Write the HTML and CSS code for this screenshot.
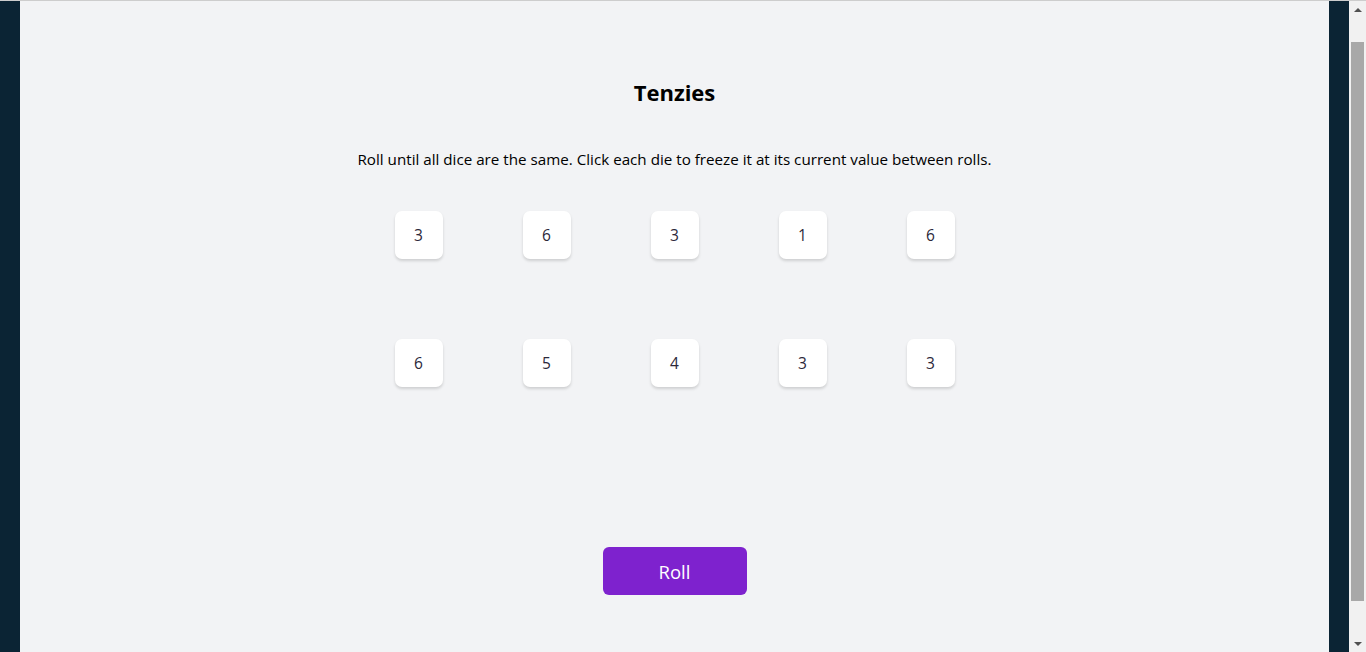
FILE: index.html
```html
<!DOCTYPE html>
<html lang="en">
<head>
<meta charset="utf-8">
<title>Tenzies</title>
<link rel="stylesheet" href="styles.css">
</head>
<body>
<main class="board">
  <h1 class="title">Tenzies</h1>
  <p class="instructions">Roll until all dice are the same. Click each die to freeze it at its current value between rolls.</p>
  <div class="dice">
    <button class="die">3</button>
    <button class="die">6</button>
    <button class="die">3</button>
    <button class="die">1</button>
    <button class="die">6</button>
    <button class="die">6</button>
    <button class="die">5</button>
    <button class="die">4</button>
    <button class="die">3</button>
    <button class="die">3</button>
  </div>
  <button class="roll">Roll</button>
</main>
<div class="scrollbar" aria-hidden="true">
  <span class="arrow arrow-up"></span>
  <span class="track"><span class="thumb"></span></span>
  <span class="arrow arrow-down"></span>
</div>
</body>
</html>
```

FILE: styles.css
```css
html {
  border-top: 1px solid #cdcdcd;
}
body {
  margin: 0 17px 0 0;
  background: #0b2434;
  font-family: "Open Sans", "Noto Sans", sans-serif;
  color: #000;
}
.board {
  margin: 0 20px;
  min-height: 721px;
  background: #f2f3f5;
  display: flex;
  flex-direction: column;
  align-items: center;
  padding-top: 76px;
  box-sizing: border-box;
}
.title {
  margin: 0;
  font-size: 22px;
  line-height: 30px;
  font-weight: 700;
}
.instructions {
  margin: 40px 0 0;
  font-size: 15.2px;
  line-height: 24px;
}
.dice {
  margin-top: 40px;
  display: grid;
  grid-template-columns: repeat(5, 48px);
  grid-auto-rows: 48px;
  gap: 80px;
}
.die {
  width: 48px;
  height: 48px;
  border: none;
  border-radius: 7px;
  background: #fff;
  box-shadow: 0 2px 3px rgba(0, 0, 0, 0.15);
  font-family: inherit;
  font-size: 15.5px;
  color: #2b283a;
  padding: 0;
}
.roll {
  margin-top: 160px;
  width: 144px;
  height: 48px;
  border: none;
  border-radius: 6px;
  background: #7e22ce;
  color: #fff;
  font-family: inherit;
  font-size: 18.5px;
}
.scrollbar {
  position: fixed;
  top: 1px;
  right: 0;
  bottom: 0;
  width: 17px;
  background: #f1f1f1;
  display: flex;
  flex-direction: column;
  align-items: center;
}
.arrow {
  flex: 0 0 17px;
  width: 17px;
  display: flex;
  align-items: center;
  justify-content: center;
}
.arrow::before {
  content: "";
  border-left: 4px solid transparent;
  border-right: 4px solid transparent;
}
.arrow-up::before {
  border-bottom: 4px solid #505050;
}
.arrow-down::before {
  border-top: 4px solid #505050;
}
.track {
  flex: 1;
  width: 100%;
  padding: 24px 2px 34px;
  box-sizing: border-box;
  display: flex;
}
.thumb {
  flex: 1;
  background: #a8a8a8;
}
```
